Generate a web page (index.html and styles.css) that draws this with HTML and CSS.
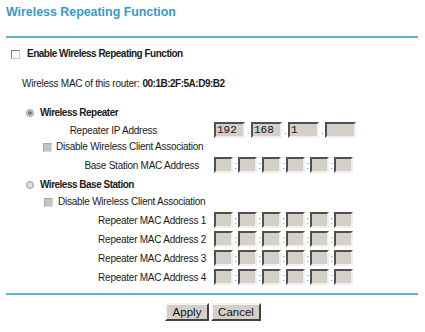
FILE: index.html
```html
<!DOCTYPE html>
<html>
<head>
	<title>Wireless Repeating Function</title>
	<meta charset="utf-8">
	<link rel="stylesheet" href="styles.css">
</head>

<body>

<form id="repeat-form" class="page">
	<h1 class="title">Wireless Repeating Function</h1>
	<div class="rule"></div>

	<div class="row enable">
		<span class="check"></span>
		<b>Enable Wireless Repeating Function</b>
	</div>

	<div class="row mac-info">Wireless MAC of this router: <b>00:1B:2F:5A:D9:B2</b></div>

	<div class="row opt opt-repeater">
		<span class="radio on"></span>
		<b>Wireless Repeater</b>
	</div>

	<div class="field ip-row">
		<label class="lbl lbl-ip">Repeater IP Address</label>
		<div class="boxes">
			<input class="box ip" value="192"><span class="sep">.</span>
			<input class="box ip" value="168"><span class="sep">.</span>
			<input class="box ip" value="1"><span class="sep">.</span>
			<input class="box ip" value="">
		</div>
	</div>

	<div class="row sub sub-1">
		<span class="check off"></span>
		Disable Wireless Client Association
	</div>

	<div class="field base-row">
		<label class="lbl lbl-base">Base Station MAC Address</label>
		<div class="boxes mac"></div>
	</div>

	<div class="row opt opt-base">
		<span class="radio"></span>
		<b>Wireless Base Station</b>
	</div>

	<div class="row sub sub-2">
		<span class="check off"></span>
		Disable Wireless Client Association
	</div>

	<div class="mac-list">
		<div class="field"><label class="lbl lbl-rep">Repeater MAC Address 1</label><div class="boxes mac"></div></div>
		<div class="field"><label class="lbl lbl-rep">Repeater MAC Address 2</label><div class="boxes mac"></div></div>
		<div class="field"><label class="lbl lbl-rep">Repeater MAC Address 3</label><div class="boxes mac"></div></div>
		<div class="field"><label class="lbl lbl-rep">Repeater MAC Address 4</label><div class="boxes mac"></div></div>
	</div>

	<div class="rule bottom"></div>

	<div class="buttons">
		<button type="button" class="btn btn-apply">Apply</button>
		<button type="button" class="btn btn-cancel">Cancel</button>
	</div>
</form>

<script>
(function() {
	var groups = document.querySelectorAll('.boxes.mac');
	for (var g = 0; g < groups.length; g++) {
		for (var i = 0; i < 6; i++) {
			var input = document.createElement('input');
			input.className = 'box mac-box';
			groups[g].appendChild(input);
			if (i < 5) {
				var sep = document.createElement('span');
				sep.className = 'sep';
				sep.innerHTML = ':';
				groups[g].appendChild(sep);
			}
		}
	}
})();
</script>
</body>
</html>
```

FILE: styles.css
```css
body {
	margin: 0;
	background: #fff;
	color: #1a1a1a;
	font-family: "Liberation Sans", Arial, sans-serif;
	font-size: 10px;
	letter-spacing: -0.25px;
}
b {
	letter-spacing: -0.5px;
}
.page {
	padding: 5px 7px 0 6px;
}
.title {
	margin: 0;
	height: 14px;
	line-height: 14px;
	font-size: 12.4px;
	font-weight: bold;
	letter-spacing: 0;
	color: #3799cc;
}
.rule {
	height: 2px;
	margin-top: 17px;
	background: #5cb6cc;
}
.rule.bottom {
	margin-top: 8px;
}
.row {
	display: flex;
	align-items: center;
	height: 14px;
	line-height: 14px;
}
.enable {
	margin-top: 9px;
	padding-left: 5px;
}
.enable b {
	margin-left: 7px;
}
.mac-info {
	margin-top: 16px;
	padding-left: 16px;
}
.mac-info b {
	margin-left: 3px;
}
.opt {
	padding-left: 20px;
}
.opt b {
	margin-left: 6px;
}
.opt-repeater {
	margin-top: 15px;
}
.opt-base {
	margin-top: 5px;
}
.sub {
	padding-left: 37px;
}
.sub-1 {
	margin-top: 2px;
}
.sub-2 {
	margin-top: 3px;
	padding-left: 38px;
}
.sub .check {
	margin-right: 4px;
}
.sub-2 .check {
	margin-right: 5px;
}
.check {
	display: inline-block;
	box-sizing: border-box;
	width: 9px;
	height: 9px;
	border: 1px solid #808080;
	border-right-color: #c8c8c8;
	border-bottom-color: #c8c8c8;
	background: #fff;
}
.check.off {
	background: #c4c4c4;
	border-color: #a8a8a8 #d8d8d8 #d8d8d8 #a8a8a8;
}
.radio {
	display: inline-block;
	box-sizing: border-box;
	width: 8px;
	height: 8px;
	border-radius: 50%;
	border: 1px solid #9a9a9a;
	background: #dcdcdc;
	position: relative;
}
.radio.on::after {
	content: "";
	position: absolute;
	left: 1px;
	top: 1px;
	width: 4px;
	height: 4px;
	border-radius: 50%;
	background: #7a7a7a;
}
.field {
	display: grid;
	grid-template-columns: 208px auto;
	align-items: center;
	height: 16px;
}
.ip-row {
	margin-top: 2px;
}
.base-row {
	margin-top: 3px;
}
.lbl {
	text-align: right;
}
.lbl-ip {
	padding-right: 57px;
}
.lbl-base {
	padding-right: 15px;
}
.lbl-rep {
	padding-right: 8px;
}
.mac-list {
	display: flex;
	flex-direction: column;
	gap: 3px;
	margin-top: 3px;
}
.boxes {
	display: flex;
	align-items: center;
}
.box {
	box-sizing: border-box;
	height: 16px;
	margin: 0;
	padding: 0 1px;
	background: #d4d0c8;
	border: 2px solid;
	border-color: #505050 #f0f0f0 #f0f0f0 #505050;
	font-family: "Liberation Mono", "Courier New", monospace;
	font-size: 11px;
	letter-spacing: 0;
	color: #111;
	outline: none;
}
.ip {
	width: 31px;
}
.mac-box {
	width: 19px;
}
.sep {
	width: 5px;
	text-align: center;
	color: #888;
}
.boxes .ip + .sep {
	width: 6px;
}
.buttons {
	display: flex;
	justify-content: center;
	gap: 2px;
	margin-top: 8px;
	padding-left: 2px;
}
.btn {
	box-sizing: border-box;
	height: 18px;
	padding: 0;
	background: #d4d0c8;
	border: 2px solid;
	border-color: #f4f4f4 #404040 #404040 #f4f4f4;
	font-family: "Liberation Sans", Arial, sans-serif;
	font-size: 11.5px;
	letter-spacing: 0;
	color: #111;
}
.btn-apply {
	width: 44px;
}
.btn-cancel {
	width: 50px;
}
```
